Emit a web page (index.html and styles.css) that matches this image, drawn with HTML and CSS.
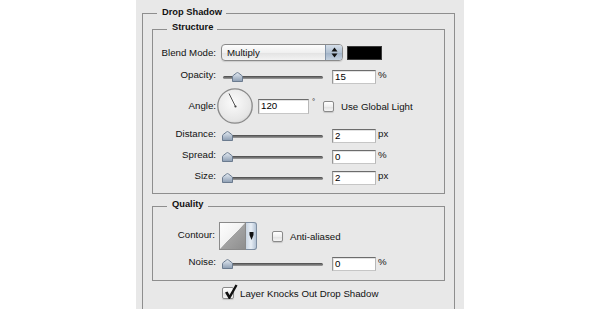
FILE: index.html
```html
<!DOCTYPE html>
<html>
<head>
<meta charset="utf-8">
<title>Drop Shadow</title>
<link rel="stylesheet" href="styles.css">
</head>
<body>
<div class="panel">
  <div class="group outer">
    <div class="legend legend-outer">Drop Shadow</div>

    <div class="group inner structure">
      <div class="legend">Structure</div>

      <div class="row row-blend">
        <span class="lbl lbl-flat">Blend Mode:</span>
        <div class="select">
          <span class="select-text">Multiply</span>
          <span class="select-btn">
            <svg width="7" height="11" viewBox="0 0 7 11"><path d="M0.5 4.5 L3.5 0.5 L6.5 4.5 Z M0.5 6.5 L3.5 10.5 L6.5 6.5 Z" fill="#111"/></svg>
          </span>
        </div>
        <div class="swatch"></div>
      </div>

      <div class="row row-opacity">
        <span class="lbl">Opacity:</span>
        <div class="slider">
          <div class="track"></div>
          <svg class="thumb" style="left:10px" width="11" height="10" viewBox="0 0 11 10"><defs><linearGradient id="tg1" x1="0" y1="0" x2="0" y2="1"><stop offset="0" stop-color="#e4ebf3"/><stop offset="1" stop-color="#8c9db2"/></linearGradient></defs><path d="M0.5 9.5 V4.8 Q0.5 4 1.3 3.4 L4.7 0.9 Q5.5 0.3 6.3 0.9 L9.7 3.4 Q10.5 4 10.5 4.8 V9.5 Z" fill="url(#tg1)" stroke="#6b7b8f"/></svg>
        </div>
        <div class="field">15</div>
        <span class="unit">%</span>
      </div>

      <div class="row row-angle">
        <span class="lbl lbl-angle">Angle:</span>
        <svg class="dial" width="36" height="36" viewBox="0 0 36 36"><defs><radialGradient id="dg" cx="45%" cy="40%" r="65%"><stop offset="0" stop-color="#fbfbfb"/><stop offset="0.8" stop-color="#e6e6e6"/><stop offset="1" stop-color="#cfcfcf"/></radialGradient></defs><circle cx="18" cy="18" r="17.2" fill="url(#dg)" stroke="#8a8a8a" stroke-width="1.3"/><line x1="18.5" y1="18.5" x2="12" y2="5.5" stroke="#555" stroke-width="1"/><circle cx="18.5" cy="18.5" r="1.1" fill="#444"/></svg>
        <div class="field field-angle">120</div>
        <span class="deg">°</span>
        <span class="check"></span>
        <span class="check-text">Use Global Light</span>
      </div>

      <div class="row row-distance">
        <span class="lbl">Distance:</span>
        <div class="slider">
          <div class="track"></div>
          <svg class="thumb" style="left:0" width="11" height="10" viewBox="0 0 11 10"><defs><linearGradient id="tg2" x1="0" y1="0" x2="0" y2="1"><stop offset="0" stop-color="#e4ebf3"/><stop offset="1" stop-color="#8c9db2"/></linearGradient></defs><path d="M0.5 9.5 V4.8 Q0.5 4 1.3 3.4 L4.7 0.9 Q5.5 0.3 6.3 0.9 L9.7 3.4 Q10.5 4 10.5 4.8 V9.5 Z" fill="url(#tg2)" stroke="#6b7b8f"/></svg>
        </div>
        <div class="field">2</div>
        <span class="unit">px</span>
      </div>

      <div class="row row-next">
        <span class="lbl">Spread:</span>
        <div class="slider">
          <div class="track"></div>
          <svg class="thumb" style="left:0" width="11" height="10" viewBox="0 0 11 10"><defs><linearGradient id="tg3" x1="0" y1="0" x2="0" y2="1"><stop offset="0" stop-color="#e4ebf3"/><stop offset="1" stop-color="#8c9db2"/></linearGradient></defs><path d="M0.5 9.5 V4.8 Q0.5 4 1.3 3.4 L4.7 0.9 Q5.5 0.3 6.3 0.9 L9.7 3.4 Q10.5 4 10.5 4.8 V9.5 Z" fill="url(#tg3)" stroke="#6b7b8f"/></svg>
        </div>
        <div class="field">0</div>
        <span class="unit">%</span>
      </div>

      <div class="row row-next">
        <span class="lbl">Size:</span>
        <div class="slider">
          <div class="track"></div>
          <svg class="thumb" style="left:0" width="11" height="10" viewBox="0 0 11 10"><defs><linearGradient id="tg4" x1="0" y1="0" x2="0" y2="1"><stop offset="0" stop-color="#e4ebf3"/><stop offset="1" stop-color="#8c9db2"/></linearGradient></defs><path d="M0.5 9.5 V4.8 Q0.5 4 1.3 3.4 L4.7 0.9 Q5.5 0.3 6.3 0.9 L9.7 3.4 Q10.5 4 10.5 4.8 V9.5 Z" fill="url(#tg4)" stroke="#6b7b8f"/></svg>
        </div>
        <div class="field">2</div>
        <span class="unit">px</span>
      </div>
    </div>

    <div class="group inner quality">
      <div class="legend">Quality</div>

      <div class="row row-contour">
        <span class="lbl lbl-contour">Contour:</span>
        <div class="contour">
          <div class="contour-square"></div>
          <div class="contour-btn">
            <svg width="5" height="8" viewBox="0 0 5 8"><path d="M0.5 0 H4.5 V3 L2.5 8 L0.5 3 Z" fill="#111"/></svg>
          </div>
        </div>
        <span class="check check-anti"></span>
        <span class="check-text">Anti-aliased</span>
      </div>

      <div class="row row-noise">
        <span class="lbl">Noise:</span>
        <div class="slider">
          <div class="track"></div>
          <svg class="thumb" style="left:0" width="11" height="10" viewBox="0 0 11 10"><defs><linearGradient id="tg5" x1="0" y1="0" x2="0" y2="1"><stop offset="0" stop-color="#e4ebf3"/><stop offset="1" stop-color="#8c9db2"/></linearGradient></defs><path d="M0.5 9.5 V4.8 Q0.5 4 1.3 3.4 L4.7 0.9 Q5.5 0.3 6.3 0.9 L9.7 3.4 Q10.5 4 10.5 4.8 V9.5 Z" fill="url(#tg5)" stroke="#6b7b8f"/></svg>
        </div>
        <div class="field">0</div>
        <span class="unit">%</span>
      </div>
    </div>

    <div class="knock">
      <span class="check check-big">
        <svg class="tick" width="14" height="16" viewBox="0 0 14 16"><path d="M1 8.5 L3.5 7.5 L5.5 11 L11.5 0.5 L13.5 1.5 L6 15 L4.8 15 Z" fill="#111"/></svg>
      </span>
      <span class="check-text">Layer Knocks Out Drop Shadow</span>
    </div>
  </div>
</div>
</body>
</html>
```

FILE: styles.css
```css
* { box-sizing: border-box; }

body {
  margin: 0;
  background: #ffffff;
  font-family: "Liberation Sans", Arial, sans-serif;
  font-size: 9.7px;
  color: #111;
}

.panel {
  width: 328px;
  height: 309px;
  margin-left: 136px;
  padding: 13px 0 0 6px;
  background: #e8e8e8;
  overflow: hidden;
}

.group {
  border: 1px solid #8e8e8e;
}

.outer {
  width: 313px;
  min-height: 300px;
  border-bottom: none;
}

.inner {
  margin: 0 9px;
}

.legend {
  display: table;
  margin: -8px 0 0 14px;
  padding: 0 4px 0 5px;
  background: #e8e8e8;
  font-weight: bold;
  font-size: 9.3px;
  line-height: 11px;
  color: #111;
}

.legend-outer {
  margin-top: -7px;
}

.structure {
  margin-top: 11px;
  padding-bottom: 8px;
}

.quality {
  margin-top: 12px;
  padding-bottom: 9px;
}

.row {
  display: flex;
  align-items: center;
}

.lbl {
  flex: none;
  width: 63px;
  text-align: right;
  line-height: 11px;
  margin-bottom: 5px;
}

.lbl-flat { margin-bottom: 0; }
.lbl-angle { margin-bottom: 2px; }
.lbl-contour { margin-bottom: 4px; width: 62px; }

.row-blend { margin-top: 11px; height: 17px; }
.row-opacity { margin-top: 9px; height: 14px; }
.row-angle { margin-top: 4px; height: 36px; }
.row-distance { margin-top: 5px; height: 14px; }
.row-next { margin-top: 7px; height: 14px; }
.row-contour { margin-top: 12px; height: 28px; }
.row-noise { margin-top: 7px; height: 14px; }

/* select */
.select {
  margin-left: 5px;
  width: 122px;
  height: 17px;
  display: flex;
  border: 1px solid #8a8a8a;
  border-radius: 4px;
  background: linear-gradient(#fdfdfd, #f0f0f0 50%, #e2e2e2 51%, #f3f3f3);
  box-shadow: 0 1px 1px rgba(0,0,0,0.12);
  overflow: hidden;
}

.select-text {
  flex: 1;
  padding-left: 5px;
  line-height: 15px;
  color: #111;
}

.select-btn {
  width: 17px;
  display: flex;
  align-items: center;
  justify-content: center;
  border-left: 1px solid #8394a8;
  background: linear-gradient(#d4dee9, #b3c2d3 50%, #9fb1c6 51%, #c4d1df);
}

.swatch {
  margin-left: 4px;
  width: 35px;
  height: 14px;
  background: #000;
  border: 1px solid #3a3a3a;
}

/* slider */
.slider {
  position: relative;
  margin-left: 6px;
  width: 102px;
  height: 14px;
  flex: none;
}

.track {
  margin: 6px 1px 0 1px;
  height: 3px;
  border-radius: 2px;
  background: linear-gradient(#474747, #7c7c7c 60%, #a0a0a0);
}

.thumb {
  position: absolute;
  top: 2px;
}

/* text fields */
.field {
  flex: none;
  margin-left: 8px;
  width: 44px;
  height: 14px;
  padding-left: 2px;
  background: #fff;
  border: 1px solid;
  border-color: #6c6c6c #b8b8b8 #c6c6c6 #979797;
  box-shadow: inset 1px 1px 0 #e2e2e2;
  line-height: 11px;
  color: #000;
}

.field-angle {
  margin-left: 5px;
  width: 51px;
  height: 15px;
}

.unit {
  align-self: flex-start;
  margin-left: 2px;
  line-height: 10px;
}

.dial {
  flex: none;
  margin-left: 1px;
}

.deg {
  align-self: flex-start;
  margin-top: 9px;
  width: 14px;
  padding-left: 3px;
  line-height: 10px;
  font-size: 8px;
}

/* checkboxes */
.check {
  position: relative;
  flex: none;
  width: 11px;
  height: 11px;
  border: 1px solid #8a8a8a;
  border-radius: 2px;
  background: linear-gradient(#ffffff, #efefef 50%, #e0e0e0 51%, #f5f5f5);
  box-shadow: 0 1px 1px rgba(0,0,0,0.15);
}

.check-text {
  margin-left: 7px;
  line-height: 11px;
}

.check-anti {
  margin-left: 15px;
}

.check-big {
  width: 12px;
  height: 12px;
}

.tick {
  position: absolute;
  left: 1px;
  top: -4px;
}

/* contour */
.contour {
  flex: none;
  display: flex;
  margin-left: 4px;
  width: 38px;
  height: 28px;
}

.contour-square {
  width: 27px;
  border: 1px solid #8a8a8a;
  background: linear-gradient(to bottom right, #fdfdfd 0%, #f2f2f2 49.5%, #a2a2a2 50.5%, #8e8e8e 100%);
}

.contour-btn {
  width: 11px;
  display: flex;
  align-items: center;
  justify-content: center;
  border: 1px solid #7f8ea0;
  border-left: none;
  border-radius: 0 3px 3px 0;
  background: linear-gradient(to right, #c9d5e2, #e8eef5 50%, #b5c4d5);
}

/* knock out */
.knock {
  display: flex;
  align-items: center;
  margin: 6px 0 0 79px;
}

.knock .check-text {
  margin-left: 6px;
}
```
